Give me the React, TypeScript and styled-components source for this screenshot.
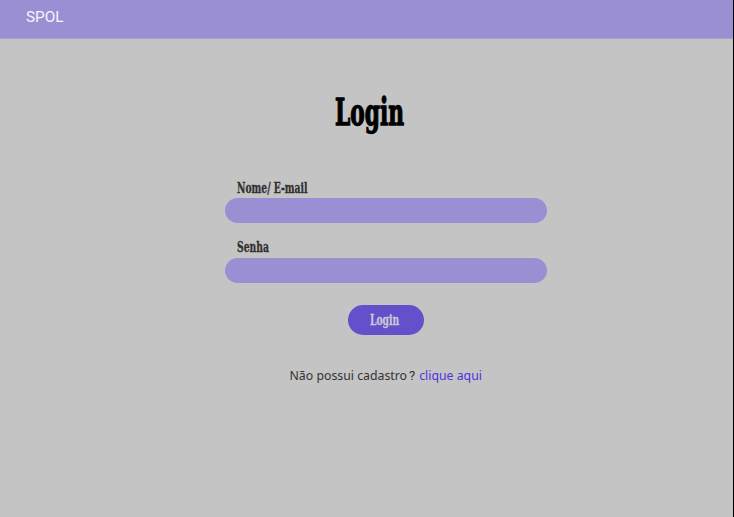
import React from 'react';
import styled, { createGlobalStyle } from 'styled-components';

const GlobalStyle = createGlobalStyle`
  * { box-sizing: border-box; }
  body { margin: 0; background: #c4c4c4; }
`;

const Page = styled.div`
  width: 734px;
  height: 517px;
  overflow: hidden;
  background: #c4c4c4;
  border-right: 1px solid #000;
`;

const Header = styled.header`
  height: 39px;
  padding: 8px 26px 0;
  background: #998fd2;
  border-bottom: 1px solid #a8a0cd;
  color: #f6f4ff;
  font: 400 15.3px/19px Roboto, sans-serif;
`;

const Form = styled.form`
  display: flex;
  flex-direction: column;
  width: 322px;
  margin-left: 225px;
`;

const Gothic = styled.span<{ $stretch: number; $weight?: number }>`
  display: inline-block;
  white-space: nowrap;
  transform: scaleX(${(p) => p.$stretch});
  transform-origin: 0 50%;
  -webkit-text-stroke: ${(p) => p.$weight ?? 0.3}px currentColor;
`;

const Title = styled.h1`
  height: 60px;
  margin: 43px 0 0 110px;
  color: #000;
  font: 700 38px/60px 'DejaVu Serif', serif;
  font-stretch: condensed;
`;

const Label = styled.label<{ $top: number }>`
  height: 20px;
  margin: ${(p) => p.$top}px 0 0 12px;
  color: #303030;
  font: 700 15.5px/20px 'DejaVu Serif', serif;
  font-stretch: condensed;
`;

const Field = styled.input<{ $gap?: number }>`
  width: 322px;
  height: 24.5px;
  margin: ${(p) => p.$gap ?? 0}px 0 0;
  padding: 0 12px;
  border: 0;
  border-radius: 13px;
  outline: 0;
  background: #998fd2;
`;

const Submit = styled.button`
  width: 76px;
  height: 30px;
  margin: 22.5px 0 0 123px;
  padding: 0 0 0 22px;
  border: 0;
  border-radius: 15px;
  background: #6350ca;
  color: #cbc8d4;
  text-align: left;
  font: 700 15.5px/30px 'DejaVu Serif', serif;
  font-stretch: condensed;
`;

const Hint = styled.p`
  margin: 31px 0 0 64.5px;
  color: #333;
  white-space: nowrap;
  font: 400 12.3px/20px 'Noto Sans', sans-serif;
`;

const Mark = styled.span`
  margin: 0 4px 0 2px;
  font-family: Roboto, sans-serif;
  font-size: 13px;
`;

const Link = styled.a`
  color: #4a35dc;
  text-decoration: none;
`;

export default function App() {
  return (
    <>
      <GlobalStyle />
      <Page>
        <Header>SPOL</Header>
        <Form onSubmit={(e) => e.preventDefault()}>
          <Title><Gothic $stretch={0.635} $weight={1.3}>Login</Gothic></Title>
          <Label htmlFor="user" $top={36}><Gothic $stretch={0.66}>Nome/ E-mail</Gothic></Label>
          <Field id="user" />
          <Label htmlFor="password" $top={14.5}><Gothic $stretch={0.66}>Senha</Gothic></Label>
          <Field id="password" type="password" $gap={1} />
          <Submit type="submit"><Gothic $stretch={0.66}>Login</Gothic></Submit>
          <Hint>
            Não possui cadastro<Mark>?</Mark><Link href="#">clique aqui</Link>
          </Hint>
        </Form>
      </Page>
    </>
  );
}
